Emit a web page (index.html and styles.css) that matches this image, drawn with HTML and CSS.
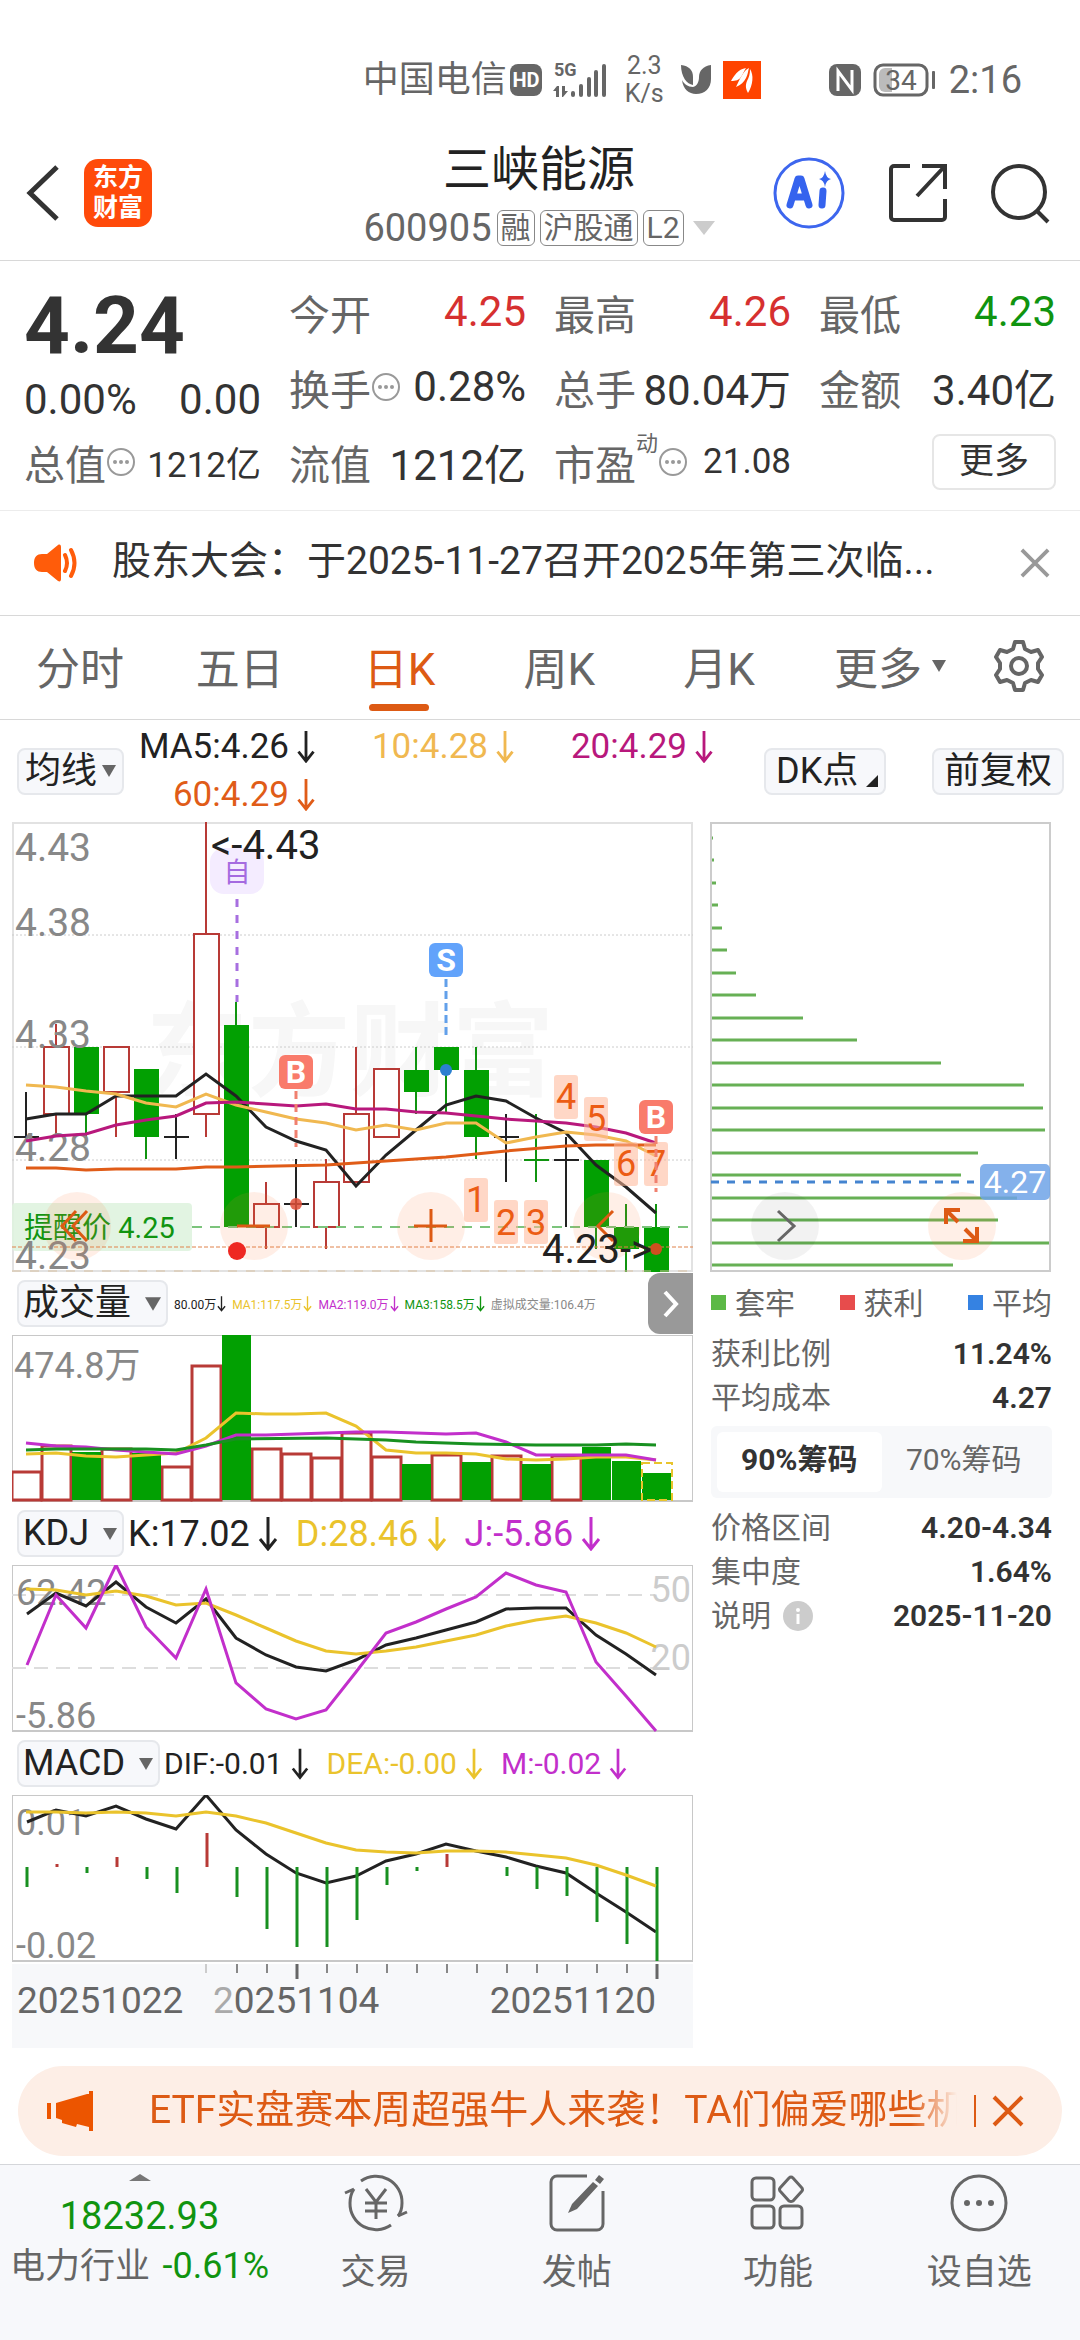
FILE: index.html
```html
<!DOCTYPE html>
<html lang="zh-CN">
<head>
<meta charset="utf-8">
<meta name="viewport" content="width=device-width, initial-scale=1">
<title>三峡能源 600905</title>
<link rel="stylesheet" href="styles.css">
</head>
<body>
<svg class="defs" aria-hidden="true">
  <symbol id="down" viewBox="0 0 20 34"><path d="M10 0V32M2 22l8 10 8-10" fill="none" stroke="currentColor" stroke-width="3"/></symbol>
  <symbol id="caret" viewBox="0 0 14 12"><path d="M0 0h14L7 12z" fill="currentColor"/></symbol>
  <symbol id="hint" viewBox="0 0 30 30"><circle cx="15" cy="15" r="13" fill="none" stroke="#999" stroke-width="2"/><g fill="#999"><circle cx="9" cy="15" r="2"/><circle cx="15" cy="15" r="2"/><circle cx="21" cy="15" r="2"/></g></symbol>
  <symbol id="cross" viewBox="0 0 32 32"><path d="M2 2l28 28M30 2L2 30" fill="none" stroke="currentColor" stroke-width="4"/></symbol>
</svg>

<div class="status">
  <span class="carrier">中国电信</span>
  <svg width="32" height="34" viewBox="0 0 32 34"><rect y="1" width="32" height="32" rx="8" fill="#666"/><text x="16" y="24" class="hd">HD</text></svg>
  <svg class="signal" width="54" height="36" viewBox="0 0 54 36"><text x="0" y="14" class="g5">5G</text><g fill="#666"><path d="M3 24l-4 5h3v6h3V24zM9 35l5-6h-3v-5H8v11z"/><rect x="17" y="29" width="4" height="6" rx="2"/><rect x="25" y="22" width="4" height="13" rx="2"/><rect x="33" y="15" width="4" height="20" rx="2"/><rect x="40" y="8" width="4" height="27" rx="2"/><rect x="48" y="2" width="4" height="33" rx="2"/></g></svg>
  <span class="speed">2.3<br>K/s</span>
  <svg class="ylogo" width="30" height="30" viewBox="0 0 30 30"><path d="M0 0C8 1 12 5 12 12V20C6 19 0 12 0 0zM30 0C22 1 18 6 18 12c0 5-2 9-6 10C7 22 3 19 1 15c1 9 7 14 14 14 9 0 15-6 15-15z" fill="#666"/></svg>
  <svg width="38" height="38" viewBox="0 0 38 38"><rect width="38" height="38" fill="#ff4400"/><g fill="#fff"><path d="M23 7C15 8 11 15 8 20c5 0 8-1 10-4 2-3 3-6 5-9z"/><path d="M26 7C20 10 17 18 13 26c5-2 8-5 10-9 2-4 2-7 3-10z"/><path d="M27 8C31 14 30 24 25 32c-2-4-3-7-1-12 2-4 3-7 3-12z"/></g></svg>
  <svg class="nfc" width="32" height="34" viewBox="0 0 32 34"><rect y="1" width="32" height="32" rx="8" fill="#666"/><path d="M9 28V8l14 19V7" fill="none" stroke="#fff" stroke-width="3"/></svg>
  <svg width="64" height="34" viewBox="0 0 64 34"><rect x="2" y="2" width="52" height="30" rx="8" fill="#fff" stroke="#666" stroke-width="3"/><path d="M12 5h7v24h-7a6 6 0 0 1-6-6V11a6 6 0 0 1 6-6z" fill="#bbb"/><rect x="59" y="8" width="3" height="18" rx="1" fill="#666"/><text x="28" y="27" class="bat">34</text></svg>
  <span class="clock">2:16</span>
</div>

<header class="header">
  <div class="side">
    <button class="icon-btn" aria-label="返回"><svg width="34" height="58" viewBox="0 0 34 58"><path d="M31 3L4 29l27 26" fill="none" stroke="#333" stroke-width="5"/></svg></button>
    <a class="brand" href="#">东方<br>财富</a>
  </div>
  <div class="stock">
    <h1>三峡能源</h1>
    <div class="code"><span>600905</span><i>融</i><i>沪股通</i><i>L2</i><svg width="22" height="14" viewBox="0 0 22 14"><path d="M0 0h22L11 14z" fill="#ccc"/></svg></div>
  </div>
  <div class="side side-end">
    <button class="icon-btn" aria-label="AI"><svg width="74" height="74" viewBox="0 0 74 74"><circle cx="37" cy="37" r="34" fill="#fff" stroke="#3d66ee" stroke-width="3"/><g fill="none" stroke="#3563ee" stroke-width="7" stroke-linecap="round" stroke-linejoin="round"><path d="M18 49l8-26h3l8 26M22 41h12M51 35l-1 14"/></g><path d="M53 15q1 7 6 8-5 1-6 8-1-7-6-8 5-1 6-8z" fill="#3563ee"/></svg></button>
    <button class="icon-btn" aria-label="分享"><svg width="60" height="60" viewBox="0 0 60 60"><path d="M22 3H6a3 3 0 0 0-3 3v48a3 3 0 0 0 3 3h48a3 3 0 0 0 3-3V36M34 3h23v23M57 3L29 33" fill="none" stroke="#333" stroke-width="4"/></svg></button>
    <button class="icon-btn" aria-label="搜索"><svg width="62" height="62" viewBox="0 0 62 62"><circle cx="29" cy="30" r="26" fill="none" stroke="#333" stroke-width="4"/><path d="M47 49l11 11" stroke="#333" stroke-width="4"/></svg></button>
  </div>
</header>

<section class="quote">
  <div class="price">4.24</div>
  <div class="cell"><span>今开</span><b class="up">4.25</b></div>
  <div class="cell"><span>最高</span><b class="up">4.26</b></div>
  <div class="cell"><span>最低</span><b class="dn">4.23</b></div>
  <div class="cell change"><b>0.00%</b><b>0.00</b></div>
  <div class="cell"><span>换手<svg width="30" height="30"><use href="#hint"/></svg></span><b>0.28%</b></div>
  <div class="cell"><span>总手</span><b>80.04万</b></div>
  <div class="cell"><span>金额</span><b>3.40亿</b></div>
  <div class="cell"><span>总值<svg width="30" height="30"><use href="#hint"/></svg></span><b class="sm">1212亿</b></div>
  <div class="cell"><span>流值</span><b>1212亿</b></div>
  <div class="cell"><span>市盈<sup>动</sup><svg width="30" height="30"><use href="#hint"/></svg></span><b class="sm">21.08</b></div>
  <div class="cell cell-end"><button class="more">更多</button></div>
</section>

<section class="notice">
  <svg width="46" height="38" viewBox="0 0 46 38"><path d="M8 10h5L24 1c2-1 3 0 3 2v32c0 2-1 3-3 2l-11-9H8c-5 0-8-3-8-9s3-9 8-9z" fill="#ff5c0a"/><path d="M31 11q4 8 0 16M37 6q7 13 0 26" fill="none" stroke="#ff5c0a" stroke-width="4" stroke-linecap="round"/></svg>
  <a href="#">股东大会：于2025-11-27召开2025年第三次临...</a>
  <button class="icon-btn close" aria-label="关闭"><svg width="30" height="30"><use href="#cross"/></svg></button>
</section>

<nav class="tabs">
  <button>分时</button><button>五日</button><button class="on">日K</button><button>周K</button><button>月K</button>
  <button>更多<svg width="14" height="12"><use href="#caret"/></svg></button>
  <button aria-label="设置"><svg width="52" height="52" viewBox="0 0 52 52"><path d="M22 2h8l2 7 6 3 7-2 4 7-4 6v6l4 6-4 7-7-2-6 3-2 7h-8l-2-7-6-3-7 2-4-7 4-6v-6l-4-6 4-7 7 2 6-3z" fill="none" stroke="#666" stroke-width="4" stroke-linejoin="round"/><circle cx="26" cy="26" r="8" fill="none" stroke="#666" stroke-width="4"/></svg></button>
</nav>

<section class="mabar">
  <button class="chip">均线<svg width="14" height="12"><use href="#caret"/></svg></button>
  <div class="mas">
    <span>MA5:4.26<svg width="20" height="32"><use href="#down"/></svg></span>
    <span class="ma10">10:4.28<svg width="20" height="32"><use href="#down"/></svg></span>
    <span class="ma20">20:4.29<svg width="20" height="32"><use href="#down"/></svg></span>
    <span class="ma60">60:4.29<svg width="20" height="32"><use href="#down"/></svg></span>
  </div>
  <button class="chip dk">DK点<svg width="12" height="12" viewBox="0 0 12 12"><path d="M12 0v12H0z" fill="#222"/></svg></button>
  <button class="chip">前复权</button>
</section>

<main class="board">
  <div class="charts">
    <svg class="chart" viewBox="12 822 681 450">
      <text x="146" y="1088" class="wm">东方财富</text>
      <path class="frame" d="M13 823H692V1271H13z"/>
      <path class="grid" d="M12 935H693M12 1047H693M12 1160H693"/>
      <g class="blk"><path d="M26 1092V1137M14 1137H39M176 1114V1159M164 1137H189M296 1159V1227M284 1204H309M506 1114V1182M494 1137H519M566 1137V1227M554 1160H579"/></g>
      <g class="red"><path d="M56 1024V1047M56 1114V1137M116 1092V1137M206 822V934M206 1114V1137M266 1182V1204M266 1227V1249M326 1159V1182M326 1227V1249M356 1047V1114"/>
        <rect x="44" y="1047" width="25" height="67"/><rect x="104" y="1047" width="25" height="45"/><rect x="194" y="934" width="25" height="180"/><rect x="254" y="1204" width="25" height="23"/><rect x="314" y="1182" width="25" height="45"/><rect x="344" y="1114" width="25" height="68"/><rect x="374" y="1069" width="25" height="68"/></g>
      <g class="grn"><path d="M86 1114V1137M146 1137V1159M236 1002V1025M416 1047V1114M446 1069V1112M476 1047V1159M536 1114V1182M524 1160H549M596 1227V1249M626 1204V1272M656 1204V1227"/></g>
      <g class="gfill"><rect x="74" y="1047" width="25" height="67"/><rect x="134" y="1069" width="25" height="68"/><rect x="224" y="1025" width="25" height="202"/><rect x="404" y="1070" width="25" height="22"/><rect x="434" y="1047" width="25" height="23"/><rect x="464" y="1070" width="25" height="67"/><rect x="584" y="1160" width="25" height="67"/><rect x="614" y="1227" width="25" height="22"/><rect x="644" y="1227" width="25" height="45"/></g>
      <rect x="12" y="1203" width="180" height="48" rx="4" fill="#dff3df" opacity=".9"/>
      <path d="M192 1227H693" stroke="#7cc47c" stroke-width="2" stroke-dasharray="10 8"/>
      <path d="M12 1247H693" stroke="#e0824a" stroke-width="1" stroke-dasharray="4 2"/>
      <path d="M12 1271H693" stroke="#d8c0a0" stroke-width="1" stroke-dasharray="9 9"/>
      <g class="price-axis"><text x="15" y="861">4.43</text><text x="15" y="936">4.38</text><text x="15" y="1048">4.33</text><text x="15" y="1161">4.28</text><text x="15" y="1269">4.23</text></g>
      <text x="24" y="1238" class="alert">提醒价 4.25</text>
      <g class="line">
        <polyline class="c-blk" points="26,1119 56,1114 86,1114 116,1096 146,1096 176,1096 206,1074 236,1096 266,1127 296,1141 326,1150 356,1186 386,1155 416,1130 446,1105 476,1096 506,1101 536,1118 566,1133 596,1165 626,1187 656,1213"/>
        <polyline class="c-yel" points="26,1085 56,1087 86,1091 116,1094 146,1103 176,1107 206,1094 236,1105 266,1112 296,1119 326,1123 356,1130 386,1125 416,1130 446,1123 476,1123 506,1143 536,1137 566,1132 596,1135 626,1141 656,1156"/>
        <polyline class="c-mag" points="26,1141 56,1136 86,1134 116,1125 146,1120 176,1116 206,1103 236,1102 266,1104 296,1106 326,1104 356,1109 386,1109 416,1112 446,1113 476,1116 506,1119 536,1121 566,1123 596,1127 626,1133 656,1143"/>
        <polyline class="c-org" points="26,1168 56,1168 86,1170 116,1169 176,1169 206,1167 236,1167 326,1165 356,1163 386,1161 446,1157 506,1151 566,1146 596,1145 656,1145"/>
      </g>
      <g class="halo"><circle cx="77" cy="1226" r="34"/><circle cx="254" cy="1226" r="34"/><circle cx="431" cy="1226" r="34"/><circle cx="607" cy="1226" r="34"/></g>
      <path class="ctl" d="M76 1211L62 1226l14 15M87 1211L73 1226l14 15M237 1226H270M414 1226H447M431 1209V1242M613 1211L598 1226l15 15"/>
      <g class="tagbox"><rect x="464" y="1178" width="24" height="44" rx="3"/><rect x="494" y="1200" width="24" height="44" rx="3"/><rect x="524" y="1200" width="24" height="44" rx="3"/><rect x="554" y="1075" width="24" height="44" rx="3"/><rect x="584" y="1097" width="24" height="44" rx="3"/><rect x="614" y="1142" width="24" height="44" rx="3"/><rect x="644" y="1142" width="24" height="44" rx="3"/></g>
      <g class="tag"><text x="476" y="1212">1</text><text x="506" y="1235">2</text><text x="536" y="1235">3</text><text x="566" y="1109">4</text><text x="596" y="1131">5</text><text x="626" y="1176">6</text><text x="656" y="1176">7</text></g>
      <rect x="210" y="848" width="54" height="46" rx="14" fill="#f4ecff"/><text x="237" y="882" class="self">自</text>
      <path d="M237 899V1002" stroke="#a76fe0" stroke-width="3" stroke-dasharray="8 8"/>
      <path d="M296 1091V1147M656 1136V1192" stroke="#f0806f" stroke-width="3" stroke-dasharray="8 5"/>
      <path d="M446 979V1035" stroke="#62a0ea" stroke-width="3" stroke-dasharray="8 4"/>
      <rect x="279" y="1055" width="34" height="34" rx="6" fill="#f97b6b"/><rect x="639" y="1100" width="34" height="34" rx="6" fill="#f97b6b"/><rect x="429" y="943" width="34" height="34" rx="6" fill="#62a3fb"/>
      <g class="bs"><text x="296" y="1083">B</text><text x="656" y="1128">B</text><text x="446" y="971">S</text></g>
      <circle cx="296" cy="1204" r="6" fill="#e04f38" opacity=".85"/><circle cx="656" cy="1249" r="6" fill="#cf4f20"/><circle cx="446" cy="1070" r="6" fill="#2c80d0"/><circle cx="237" cy="1251" r="9" fill="#ee2822"/>
      <g class="mark"><text x="211" y="859">&lt;-4.43</text><text x="652" y="1263" text-anchor="end">4.23-&gt;</text></g>
    </svg>

    <div class="ind ind-vol">
      <button class="chip wide">成交量<svg width="16" height="14"><use href="#caret"/></svg></button>
      <span>80.00万<svg width="9" height="16"><use href="#down"/></svg></span>
      <span class="y">MA1:117.5万<svg width="9" height="16"><use href="#down"/></svg></span>
      <span class="m">MA2:119.0万<svg width="9" height="16"><use href="#down"/></svg></span>
      <span class="g">MA3:158.5万<svg width="9" height="16"><use href="#down"/></svg></span>
      <span class="n">虚拟成交量:106.4万</span>
      <button class="toggle" aria-label="收起"><svg width="16" height="28" viewBox="0 0 16 28"><path d="M2 2l11 12L2 26" fill="none" stroke="#fff" stroke-width="4"/></svg></button>
    </div>
    <svg class="chart" viewBox="12 1335 681 167">
      <path class="frame2" d="M12 1335H693V1501H12z"/>
      <text x="14" y="1378" class="lab">474.8万</text>
      <g class="vred"><rect x="12" y="1472" width="29" height="28"/><rect x="42" y="1446" width="29" height="54"/><rect x="102" y="1449" width="29" height="51"/><rect x="162" y="1467" width="29" height="33"/><rect x="192" y="1366" width="29" height="134"/><rect x="252" y="1449" width="29" height="51"/><rect x="282" y="1454" width="29" height="46"/><rect x="312" y="1458" width="29" height="42"/><rect x="342" y="1433" width="29" height="67"/><rect x="372" y="1457" width="29" height="43"/><rect x="432" y="1455" width="29" height="45"/><rect x="492" y="1456" width="29" height="44"/><rect x="552" y="1456" width="29" height="44"/></g>
      <g class="gfill"><rect x="72" y="1452" width="29" height="48"/><rect x="132" y="1453" width="29" height="47"/><rect x="222" y="1335" width="29" height="165"/><rect x="402" y="1464" width="29" height="36"/><rect x="462" y="1462" width="29" height="38"/><rect x="522" y="1464" width="29" height="36"/><rect x="582" y="1447" width="29" height="53"/><rect x="612" y="1461" width="29" height="39"/><rect x="642" y="1473" width="29" height="27"/></g>
      <rect x="642" y="1463" width="30" height="37" fill="none" stroke="#e9c42c" stroke-width="2" stroke-dasharray="8 4"/>
      <g class="line">
        <polyline class="c-gold" points="26,1454 56,1453 86,1456 116,1457 146,1455 176,1453 206,1438 236,1413 266,1414 296,1414 326,1413 356,1426 386,1450 416,1453 446,1453 476,1454 506,1459 536,1460 566,1459 596,1457 626,1457 656,1460"/>
        <polyline class="c-pur" points="26,1443 56,1446 86,1447 116,1450 146,1452 176,1454 206,1446 236,1435 266,1435 296,1434 356,1432 386,1432 416,1433 446,1434 476,1433 506,1442 536,1455 566,1455 626,1455 656,1460"/>
        <polyline class="c-grn" points="26,1450 56,1449 116,1449 146,1449 176,1450 206,1445 236,1439 326,1438 386,1440 416,1442 476,1444 536,1445 596,1445 626,1444 656,1445"/>
      </g>
    </svg>

    <div class="ind">
      <button class="chip wide">KDJ<svg width="14" height="14"><use href="#caret"/></svg></button>
      <span>K:17.02<svg width="20" height="34"><use href="#down"/></svg></span>
      <span class="y">D:28.46<svg width="20" height="34"><use href="#down"/></svg></span>
      <span class="m">J:-5.86<svg width="20" height="34"><use href="#down"/></svg></span>
    </div>
    <svg class="chart" viewBox="12 1565 681 167">
      <path class="frame2" d="M12 1565H693V1731H12z"/>
      <path d="M12 1595H655M12 1668H655" stroke="#ddd" stroke-width="2" stroke-dasharray="14 8"/>
      <g class="lab"><text x="16" y="1605">62.42</text><text x="16" y="1728">-5.86</text></g>
      <g class="lab lite"><text x="691" y="1602" text-anchor="end">50</text><text x="691" y="1670" text-anchor="end">20</text></g>
      <g class="line">
        <polyline class="c-blk" points="27,1614 56,1593 86,1606 116,1582 146,1607 176,1623 206,1599 236,1638 266,1655 296,1667 326,1671 356,1660 386,1645 416,1638 446,1630 476,1622 506,1609 536,1608 566,1608 596,1635 626,1654 656,1675"/>
        <polyline class="c-gold" points="26,1589 56,1590 86,1595 116,1591 146,1596 176,1605 206,1603 236,1615 266,1628 296,1641 326,1651 356,1654 386,1651 416,1647 446,1641 476,1635 506,1626 536,1620 566,1616 596,1623 626,1633 656,1647"/>
        <polyline class="c-pur" points="27,1665 56,1595 86,1628 116,1565 146,1627 176,1658 206,1589 236,1683 266,1709 296,1719 326,1710 356,1672 386,1633 416,1622 446,1609 476,1597 506,1573 536,1585 566,1592 596,1662 626,1696 656,1731"/>
      </g>
    </svg>

    <div class="ind ind-macd">
      <button class="chip wide">MACD<svg width="14" height="14"><use href="#caret"/></svg></button>
      <span>DIF:-0.01<svg width="18" height="34"><use href="#down"/></svg></span>
      <span class="y">DEA:-0.00<svg width="18" height="34"><use href="#down"/></svg></span>
      <span class="m">M:-0.02<svg width="18" height="34"><use href="#down"/></svg></span>
    </div>
    <svg class="chart" viewBox="12 1795 681 167">
      <path class="frame2" d="M12 1795H693V1961H12z"/>
      <g class="lab"><text x="16" y="1835">0.01</text><text x="16" y="1958">-0.02</text></g>
      <polyline class="line c-blk" points="27,1822 56,1810 86,1816 116,1806 146,1819 176,1829 206,1795 236,1830 266,1854 296,1873 326,1883 356,1876 386,1861 416,1854 446,1844 476,1851 506,1857 536,1866 566,1873 596,1893 626,1912 656,1932"/>
      <path class="line c-dgrn" d="M27 1867V1887M87 1867V1873M147 1867V1879M177 1867V1893M237 1867V1897M267 1867V1929M297 1867V1947M327 1867V1947M357 1867V1920M387 1867V1885M417 1867V1871M507 1867V1876M537 1867V1889M567 1867V1896M597 1867V1922M627 1867V1944M657 1867V1961"/>
      <path class="line c-dred" d="M57 1867V1864M117 1867V1857M207 1867V1833M447 1867V1854"/>
      <polyline class="line c-gold" points="26,1812 56,1812 86,1813 116,1812 146,1813 176,1816 206,1812 236,1816 266,1823 296,1833 326,1843 356,1850 386,1852 416,1853 446,1851 476,1851 506,1852 536,1855 566,1858 596,1865 626,1875 656,1886"/>
    </svg>
    <svg class="chart" viewBox="12 1962 681 86">
      <rect x="12" y="1964" width="681" height="84" fill="#f7f8fa"/>
      <path d="M206 1964V1973" stroke="#ccc" stroke-width="2"/>
      <path d="M237 1964V1973M267 1964V1973M327 1964V1973M357 1964V1973M387 1964V1973M417 1964V1973M447 1964V1973M477 1964V1973M507 1964V1973M537 1964V1973M567 1964V1973M597 1964V1973M627 1964V1973" stroke="#888" stroke-width="2"/>
      <path d="M297 1964V1979M657 1964V1979" stroke="#666" stroke-width="3"/>
      <g class="date"><text x="17" y="2013">20251022</text><text x="213" y="2013"><tspan fill="#aaa">2</tspan>0251104</text><text x="656" y="2013" text-anchor="end">20251120</text></g>
    </svg>
  </div>

  <aside class="chips">
    <svg class="chart" viewBox="710 822 342 450">
      <path class="cbars" d="M711 838h2M711 860h3M711 883h5M711 905h7M711 928h11M711 950h16M711 973h25M711 995h45M711 1018h92M711 1040h146M711 1063h230M711 1085h313M711 1108h332M711 1130h334M711 1153h267M711 1175h250M711 1198h306M711 1220h287M711 1243h339M711 1265h242"/>
      <path d="M711 823H1050V1271H711z" fill="none" stroke="#ccc" stroke-width="2"/>
      <path d="M711 1182H974" stroke="#4484d0" stroke-width="3" stroke-dasharray="8 8"/>
      <rect x="980" y="1164" width="70" height="36" rx="5" fill="#6fa3e8" opacity=".85"/>
      <text x="1015" y="1193" class="avg">4.27</text>
      <circle cx="785" cy="1226" r="34" fill="#000" opacity=".05"/><path d="M778 1211l16 15-16 15" fill="none" stroke="#666" stroke-width="3"/>
      <g class="halo"><circle cx="962" cy="1226" r="34"/></g>
      <path d="M958 1222L946 1210M946 1224V1210H960M965 1229l12 12M977 1227V1241H963" fill="none" stroke="#dd5a14" stroke-width="4"/>
    </svg>
    <div class="legend"><span class="l1">套牢</span><span class="l2">获利</span><span class="l3">平均</span></div>
    <div class="row"><span>获利比例</span><b>11.24%</b></div>
    <div class="row"><span>平均成本</span><b>4.27</b></div>
    <div class="seg"><button class="on">90%筹码</button><button>70%筹码</button></div>
    <div class="row"><span>价格区间</span><b>4.20-4.34</b></div>
    <div class="row"><span>集中度</span><b>1.64%</b></div>
    <div class="row"><span>说明<svg width="30" height="30" viewBox="0 0 30 30"><circle cx="15" cy="15" r="15" fill="#ccc"/><circle cx="15" cy="9" r="2" fill="#fff"/><path d="M15 13v10" stroke="#fff" stroke-width="3"/></svg></span><b>2025-11-20</b></div>
  </aside>
</main>

<section class="banner">
  <svg width="46" height="40" viewBox="0 0 46 40"><path d="M2 12v16" stroke="#ec5500" stroke-width="4"/><path d="M9 12L40 3h2V0h4v40h-4v-4L30 33l-1 3-14-4v-3l-6-2z" fill="#ec5500"/></svg>
  <a href="#">ETF实盘赛本周超强牛人来袭！TA们偏爱哪些机构</a>
  <button class="icon-btn" aria-label="关闭"><svg width="32" height="32"><use href="#cross"/></svg></button>
</section>

<nav class="dock">
  <a href="#" class="index">
    <svg width="22" height="7" viewBox="0 0 22 7"><path d="M11 0l11 7H0z" fill="#777"/></svg>
    <strong>18232.93</strong>
    <span>电力行业 <em>-0.61%</em></span>
  </a>
  <a href="#"><svg width="64" height="60" viewBox="0 0 64 60"><g fill="none" stroke="#666" stroke-width="3"><path d="M17 8a26 26 0 0 1 41 22q0 8-4 13"/><path d="M47 52A26 26 0 0 1 6 30q0-8 4-14M1 20l9-4v0M63 39l-9 4"/><path d="M22 16l10 13 10-13M32 29v17M21 30h22M21 38h22"/></g></svg>交易</a>
  <a href="#"><svg width="58" height="60" viewBox="0 0 58 60"><path d="M39 3H9a6 6 0 0 0-6 6v42a6 6 0 0 0 6 6h40a6 6 0 0 0 6-6V18" fill="none" stroke="#666" stroke-width="3"/><path d="M20 40l4-9L45 9l5 4-21 23zM47 7l4-5 5 4-4 5z" fill="#666"/></svg>发帖</a>
  <a href="#"><svg width="58" height="60" viewBox="0 0 58 60"><g fill="none" stroke="#666" stroke-width="3"><rect x="3" y="5" width="22" height="22" rx="4"/><rect x="3" y="33" width="22" height="22" rx="4"/><rect x="31" y="33" width="22" height="22" rx="4"/><path d="M42 4q1 0 2 1l9 10q1 2 0 3l-9 10q-2 1-4 0l-9-10q-1-2 0-3l9-10q1-1 2-1z"/></g></svg>功能</a>
  <a href="#"><svg width="60" height="60" viewBox="0 0 60 60"><circle cx="30" cy="30" r="27" fill="none" stroke="#666" stroke-width="3"/><g fill="#666"><circle cx="18" cy="30" r="3"/><circle cx="30" cy="30" r="3"/><circle cx="42" cy="30" r="3"/></g></svg>设自选</a>
</nav>
</body>
</html>
```
FILE: styles.css
```css
* { box-sizing: border-box; }
body {
  margin: 0;
  min-height: 100vh;
  display: flex;
  flex-direction: column;
  background: #fff;
  color: #333;
  font-family: Roboto, "Noto Sans CJK SC", sans-serif;
}
button { font: inherit; color: inherit; border: 0; padding: 0; background: none; }
a { color: inherit; text-decoration: none; }
b, i, em { font-weight: 400; font-style: normal; }
svg { flex: none; }
.defs { position: absolute; width: 0; height: 0; }
.icon-btn { display: flex; }

/* status bar */
.status {
  display: flex;
  align-items: center;
  justify-content: flex-end;
  height: 40px;
  margin-top: 60px;
  padding-right: 58px;
  color: #666;
}
.carrier { font-size: 36px; line-height: 36px; margin-right: 3px; }
.hd { font-size: 20px; font-weight: 700; fill: #fff; text-anchor: middle; }
.signal { margin-left: 12px; overflow: visible; }
.g5 { font-size: 18px; font-weight: 700; fill: #666; }
.speed { margin: 0 17px; font-size: 25px; line-height: 28px; text-align: center; }
.ylogo { margin-right: 12px; }
.nfc { margin: 0 12px 0 68px; }
.bat { font-size: 28px; fill: #666; text-anchor: middle; }
.clock { margin-left: 12px; font-size: 38px; }

/* header */
.header {
  display: grid;
  grid-template-columns: 1fr auto 1fr;
  align-items: center;
  margin-top: 26px;
  padding: 0 28px 0 26px;
  height: 135px;
  border-bottom: 1px solid #d8d8d8;
}
.side { display: flex; align-items: center; gap: 24px; }
.side-end { justify-content: flex-end; gap: 42px; }
.brand {
  width: 68px;
  height: 68px;
  border-radius: 14px;
  background: #ff4a0a;
  color: #fff;
  font-size: 25px;
  font-weight: 700;
  line-height: 30px;
  padding-top: 4px;
  text-align: center;
}
.stock { padding-top: 10px; color: #222; text-align: center; }
h1 { margin: 0; font-size: 48px; font-weight: 400; line-height: 60px; }
.code { display: flex; align-items: center; gap: 5px; height: 56px; font-size: 38px; color: #666; }
.code i { border: 1px solid #888; border-radius: 6px; padding: 0 3px; font-size: 30px; line-height: 34px; }
.code svg { margin-left: 4px; }

/* quote grid */
.quote {
  display: grid;
  grid-template-columns: repeat(4, 1fr);
  grid-auto-rows: 75px;
  column-gap: 28px;
  padding: 13px 24px 11px;
  border-bottom: 1px solid #ececec;
}
.price { padding-top: 10px; font-size: 80px; font-weight: 700; line-height: 84px; }
.cell { display: flex; align-items: center; justify-content: space-between; white-space: nowrap; }
.cell span { display: flex; align-items: center; font-size: 41px; color: #666; }
.cell sup { align-self: flex-start; font-size: 22px; line-height: 24px; }
.cell b { font-size: 42px; }
.cell .sm { font-size: 35px; }
.cell .up { color: #d63030; }
.cell .dn { color: #109410; }
.change { padding-top: 26px; }
.cell-end { justify-content: flex-end; }
.more { width: 124px; height: 56px; border: 2px solid #e6e6e6; border-radius: 8px; font-size: 35px; line-height: 48px; }

/* notice */
.notice {
  display: flex;
  align-items: center;
  height: 105px;
  padding: 0 30px 0 34px;
  border-bottom: 1px solid #d8d8d8;
  font-size: 39px;
  line-height: 50px;
  white-space: nowrap;
}
.notice a { flex: 1; margin: 0 0 4px 32px; }
.close { color: #999; }

/* period tabs */
.tabs {
  display: grid;
  grid-template-columns: repeat(5, 1fr) 182px 75px;
  height: 104px;
  padding-right: 24px;
  border-bottom: 1px solid #d8d8d8;
  color: #666;
  font-size: 44px;
}
.tabs button { display: flex; align-items: center; justify-content: center; gap: 10px; padding-bottom: 3px; }
.tabs .on { position: relative; color: #dd5a14; }
.tabs .on::after {
  content: "";
  position: absolute;
  bottom: 8px;
  width: 60px;
  height: 7px;
  border-radius: 4px;
  background: #dd5a14;
}

/* moving averages */
.chip {
  display: flex;
  align-items: center;
  gap: 5px;
  height: 47px;
  padding: 0 8px;
  border: 2px solid #e6e8ec;
  border-radius: 8px;
  background: #f7f8fb;
  color: #222;
  font-size: 36px;
  line-height: 43px;
  white-space: nowrap;
}
.chip svg { color: #666; }
.mabar { display: flex; align-items: center; height: 102px; padding: 0 16px 0 17px; font-size: 35px; }
.mabar .chip:first-child { padding: 0 6px; }
.mas {
  display: grid;
  grid-template-columns: repeat(3, 199px);
  justify-content: end;
  width: 590px;
  color: #222;
  line-height: 48px;
}
.mas span { display: flex; align-items: center; justify-content: flex-end; gap: 7px; white-space: nowrap; }
.mas .ma10 { color: #f0b850; }
.mas .ma20 { color: #b8187c; }
.mas .ma60 { color: #e05c18; }
.mabar .dk { margin: 0 auto 0 50px; padding: 0 6px 0 10px; gap: 8px; }
.dk svg { margin-top: 20px; }
.mabar .chip:last-child { padding: 0 10px; }

/* chart board */
.board { display: grid; grid-template-columns: 681fr 342fr; column-gap: 17px; padding: 0 28px 0 12px; }
.chart { display: block; width: 100%; height: auto; }
.frame { fill: none; stroke: #e2e2e2; stroke-width: 2; }
.frame2 { fill: none; stroke: #c8c8c8; stroke-width: 2; }
.grid { stroke: #ccc; stroke-width: 1; stroke-dasharray: 2 2; }
.wm { font-size: 102px; font-weight: 700; fill: #f7f7f7; }
.blk { stroke: #222; stroke-width: 2; }
.red { stroke: #b83a36; stroke-width: 2; fill: #fff; }
.grn { stroke: #109410; stroke-width: 2; }
.gfill { fill: #02a002; }
.vred { stroke: #b83a36; stroke-width: 3; fill: none; }
.line { fill: none; stroke-width: 3; }
.c-blk { stroke: #222; }
.c-yel { stroke: #f0b850; }
.c-mag { stroke: #b8187c; }
.c-org { stroke: #e05c18; }
.c-gold { stroke: #eac32c; }
.c-pur { stroke: #c22fcb; }
.c-grn { stroke: #189020; }
.c-dgrn { stroke: #189020; }
.c-dred { stroke: #b83a36; }
.price-axis { font-size: 39px; fill: #888; }
.alert { font-size: 29px; fill: #109410; }
.halo { fill: #ff7a3c; opacity: .12; }
.ctl { fill: none; stroke: #dd5a14; stroke-width: 3; }
.tagbox { fill: #ffb898; opacity: .55; }
.tag { font-size: 36px; fill: #ec5c14; text-anchor: middle; }
.self { font-size: 27px; fill: #a56be0; text-anchor: middle; }
.bs { font-size: 32px; font-weight: 700; fill: #fff; text-anchor: middle; }
.mark { font-size: 40px; fill: #222; }
.lab { font-size: 36px; fill: #888; }
.lite { fill: #ccc; }
.date { font-size: 37px; fill: #666; }
.cbars { stroke: #67b055; stroke-width: 3; }
.avg { font-size: 32px; fill: #fff; text-anchor: middle; }

/* indicator headers */
.ind { display: flex; align-items: center; gap: 18px; height: 63px; padding-left: 5px; font-size: 36px; color: #222; white-space: nowrap; }
.ind span { display: flex; align-items: center; gap: 8px; }
.ind .wide { gap: 14px; padding: 0 5px 0 4px; margin-right: -14px; }
.ind .y { color: #eac32c; }
.ind .m { color: #c22fcb; }
.ind .g { color: #109410; }
.ind .n { color: #888; }
.ind-macd { font-size: 30px; }
.ind-vol { gap: 6px; font-size: 12px; }
.ind-vol span { gap: 1px; }
.ind-vol .wide { margin-right: 0; }
.toggle {
  display: flex;
  align-items: center;
  justify-content: center;
  width: 45px;
  height: 61px;
  margin-left: auto;
  border-radius: 12px 0 0 12px;
  background: #999;
}

/* chip distribution */
.chips { padding-left: 1px; color: #666; font-size: 30px; }
.chips .chart { width: calc(100% + 1px); margin-left: -1px; }
.legend { display: flex; justify-content: space-between; height: 60px; line-height: 64px; }
.legend span::before { content: ""; display: inline-block; width: 15px; height: 15px; margin: 0 9px 4px 0; }
.l1::before { background: #5cb946; }
.l2::before { background: #e74c4c; }
.l3::before { background: #3582e2; }
.row { display: flex; justify-content: space-between; line-height: 44px; }
.row span { display: flex; align-items: center; gap: 12px; }
.row b { color: #333; font-weight: 600; }
.seg { display: grid; grid-template-columns: 1fr 1fr; margin: 6px 0 8px; padding: 6px; border-radius: 6px; background: #f7f8fa; }
.seg button { height: 60px; border-radius: 6px; line-height: 56px; padding-bottom: 4px; }
.seg .on { background: #fff; color: #333; font-weight: 700; }

/* promo banner */
.banner {
  display: flex;
  align-items: center;
  height: 90px;
  margin: 18px 18px 8px;
  padding: 0 38px 0 29px;
  border-radius: 45px;
  background: #fdeee6;
  color: #dd5a14;
  font-size: 39px;
}
.banner a {
  flex: 1;
  height: 60px;
  margin: 0 17px 0 56px;
  overflow: hidden;
  line-height: 58px;
  white-space: nowrap;
  -webkit-mask-image: linear-gradient(to right, #000 calc(100% - 46px), transparent);
  mask-image: linear-gradient(to right, #000 calc(100% - 46px), transparent);
}
.banner button { padding-left: 16px; border-left: 2px solid #dd5a14; }

/* bottom dock */
.dock {
  flex: 1;
  display: grid;
  grid-template-columns: 275px repeat(4, 1fr);
  border-top: 1px solid #d4d6da;
  background: #f7f8fb;
  color: #666;
  font-size: 35px;
}
.dock a { display: flex; flex-direction: column; align-items: center; padding-top: 8px; line-height: 80px; }
.dock .index { padding: 9px 0 0 4px; line-height: 50px; white-space: nowrap; }
.index strong { margin-top: 10px; font-size: 38px; font-weight: 400; color: #109410; }
.index em { margin-left: 4px; font-size: 36px; color: #109410; }
```
